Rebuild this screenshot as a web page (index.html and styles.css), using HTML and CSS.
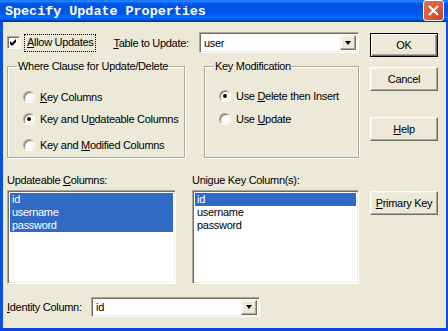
FILE: index.html
```html
<!DOCTYPE html>
<html>

<head>
	<meta charset="UTF-8">
	<title>Specify Update Properties</title>
	<link rel="stylesheet" href="styles.css">
</head>

<body>
	<div class="window">
		<div class="titlebar">
			<span class="title">Specify Update Properties</span>
			<div class="close">
				<svg width="19" height="19" viewBox="0 0 19 19">
					<path d="M5 5 L14 14 M14 5 L5 14" stroke="#fff" stroke-width="2.2" fill="none" />
				</svg>
			</div>
		</div>
		<div class="client">
			<div class="main">
				<div class="top-row">
					<div class="check-wrap">
						<span class="checkbox">
							<svg width="7" height="7" viewBox="0 0 7 7">
								<path d="M0 2 L2 4 L6 0 L6 3 L2 7 L0 5 Z" fill="#000" />
							</svg>
						</span>
						<span class="focus"><u>A</u>llow Updates</span>
					</div>
					<span class="table-label"><u>T</u>able to Update:</span>
					<div class="combo combo-table">
						<span class="combo-text">user</span>
						<span class="drop"><span class="arrow"></span></span>
					</div>
				</div>

				<div class="groups">
					<fieldset class="group group-where">
						<legend>Where Clause for Update/Delete</legend>
						<div class="radio-row r1"><span class="radio"></span><span><u>K</u>ey Columns</span></div>
						<div class="radio-row r2"><span class="radio on"></span><span>Key and U<u>p</u>dateable Columns</span></div>
						<div class="radio-row r3"><span class="radio"></span><span>Key and <u>M</u>odified Columns</span></div>
					</fieldset>
					<fieldset class="group group-key">
						<legend>Key Modification</legend>
						<div class="radio-row k1"><span class="radio on"></span><span>Use <u>D</u>elete then Insert</span></div>
						<div class="radio-row k2"><span class="radio"></span><span>Use <u>U</u>pdate</span></div>
					</fieldset>
				</div>

				<div class="lists">
					<div class="list-col list-left">
						<div class="list-label">Updateable <u>C</u>olumns:</div>
						<div class="listbox">
							<div class="item sel">id</div>
							<div class="item sel">username</div>
							<div class="item sel">password</div>
						</div>
					</div>
					<div class="list-col list-right">
						<div class="list-label">Unigue Key Column(s):</div>
						<div class="listbox">
							<div class="item sel">id</div>
							<div class="item">username</div>
							<div class="item">password</div>
						</div>
					</div>
				</div>

				<div class="identity">
					<span class="identity-label"><u>I</u>dentity Column:</span>
					<div class="combo combo-identity">
						<span class="combo-text">id</span>
						<span class="drop"><span class="arrow"></span></span>
					</div>
				</div>
			</div>

			<div class="buttons">
				<div class="btn default">OK</div>
				<div class="btn cancel">Cancel</div>
				<div class="btn help"><u>H</u>elp</div>
				<div class="btn pk"><u>P</u>rimary Key</div>
			</div>
		</div>
	</div>
</body>

</html>
```

FILE: styles.css
```css
body {
	margin: 0;
	background: #fff;
	font-family: "Liberation Sans", Arial, sans-serif;
	font-size: 11px;
	letter-spacing: -0.3px;
	white-space: nowrap;
	color: #000;
}

.window {
	width: 448px;
	height: 331px;
	display: flex;
	flex-direction: column;
	overflow: hidden;
}

.titlebar {
	height: 22px;
	flex: none;
	display: flex;
	align-items: center;
	justify-content: space-between;
	padding: 0 4px 0 5px;
	background: linear-gradient(to bottom, #0058ee 0%, #3593ff 4%, #288eff 6%, #127dff 8%, #036ffc 10%, #0262ee 14%, #0057e5 20%, #0054e3 24%, #0055eb 56%, #005bf5 66%, #026afe 76%, #0062ef 86%, #0052d6 92%, #0040ab 94%, #003092 100%);
}

.title {
	color: #fff;
	font-family: "Liberation Mono", "DejaVu Sans Mono", monospace;
	font-weight: bold;
	font-size: 13.4px;
	letter-spacing: 0;
	margin-top: 1px;
}

.close {
	width: 19px;
	height: 19px;
	border: 1px solid #fff;
	border-radius: 3px;
	background: radial-gradient(circle at 80% 85%, #cc4626 0%, #e0582f 45%, #e67155 100%);
	display: flex;
	align-items: center;
	justify-content: center;
	margin-top: -1px;
}

.close svg {
	display: block;
}

.client {
	flex: 1;
	display: flex;
	background: #ece9d8;
	border-left: 3px solid #0a50e0;
	border-right: 2px solid #0a50e0;
	border-bottom: 3px solid #0a46d8;
	padding: 10px 0 0 4px;
}

.main {
	width: 352px;
	display: flex;
	flex-direction: column;
}

/* top row */

.top-row {
	height: 21px;
	display: flex;
	align-items: center;
}

.check-wrap {
	display: flex;
	align-items: center;
}

.checkbox {
	width: 13px;
	height: 13px;
	box-sizing: border-box;
	background: #fff;
	border: 1px solid;
	border-color: #aca899 #fff #fff #aca899;
	box-shadow: inset 1px 1px 0 #716f64, inset -1px -1px 0 #f1efe2;
	display: flex;
	align-items: center;
	justify-content: center;
}

.checkbox svg {
	display: block;
}

.focus {
	margin-left: 5px;
	padding: 1px 2px 2px 2px;
	outline: 1px dotted #000;
	line-height: 13px;
}

.table-label {
	margin-left: 18px;
}

.combo {
	background: #fff;
	border: 1px solid;
	border-color: #aca899 #fff #fff #aca899;
	box-shadow: inset 1px 1px 0 #716f64, inset -1px -1px 0 #f1efe2;
	display: flex;
	align-items: center;
	justify-content: space-between;
	padding: 2px;
	box-sizing: border-box;
}

.combo-text {
	padding-left: 2px;
}

.combo-table {
	width: 160px;
	height: 21px;
	margin-left: auto;
	margin-right: 0;
}

.drop {
	width: 16px;
	height: 15px;
	box-sizing: border-box;
	background: #ece9d8;
	border: 1px solid;
	border-color: #f1efe2 #716f64 #716f64 #f1efe2;
	box-shadow: inset -1px -1px 0 #aca899, inset 1px 1px 0 #fff;
	display: flex;
	align-items: center;
	justify-content: center;
}

.arrow {
	width: 0;
	height: 0;
	border-left: 3.5px solid transparent;
	border-right: 3.5px solid transparent;
	border-top: 4px solid #000;
}

/* group boxes */

.groups {
	display: flex;
	gap: 19px;
	margin-top: 7px;
}

.group {
	margin: 0;
	padding: 0 0 0 14px;
	height: 98px;
	box-sizing: border-box;
	border: 1px solid #aca899;
	box-shadow: inset 1px 1px 0 #fff, 1px 1px 0 #fff;
	min-width: 0;
}

.group legend {
	padding: 0 1px;
	margin-left: -5px;
	line-height: 13px;
}

.group-where {
	width: 178px;
}

.group-key {
	width: 155px;
}

.radio-row {
	display: flex;
	align-items: center;
	height: 14px;
}

.radio {
	width: 12px;
	height: 12px;
	box-sizing: border-box;
	border-radius: 50%;
	background: #fff;
	border: 1px solid;
	border-color: #aca899 #fff #fff #aca899;
	box-shadow: inset 1px 1px 0 #716f64, inset -1px -1px 0 #f1efe2;
	margin-right: 5px;
	flex: none;
	display: flex;
	align-items: center;
	justify-content: center;
}

.radio.on::after {
	content: "";
	width: 4px;
	height: 4px;
	border-radius: 50%;
	background: #000;
}

.r1 {
	margin-top: 17px;
}

.r2 {
	margin-top: 8px;
}

.r3 {
	margin-top: 12px;
}

.k1 {
	margin-top: 16px;
}

.k2 {
	margin-top: 9px;
}

.group-where .radio-row {
	margin-left: 1px;
}

/* lists */

.lists {
	display: flex;
	gap: 16px;
	margin-top: 16px;
}

.list-left {
	width: 170px;
}

.list-right {
	width: 168px;
}

.list-label {
	line-height: 13px;
	margin-bottom: 3px;
}

.listbox {
	height: 94px;
	box-sizing: border-box;
	background: #fff;
	border: 1px solid;
	border-color: #aca899 #fff #fff #aca899;
	box-shadow: inset 1px 1px 0 #716f64, inset -1px -1px 0 #f1efe2;
	padding: 2px;
}

.item {
	height: 13px;
	line-height: 13px;
	padding-left: 2px;
}

.item.sel {
	background: #316ac5;
	color: #fff;
}

/* identity */

.identity {
	display: flex;
	align-items: center;
	margin-top: 13px;
}

.combo-identity {
	width: 169px;
	height: 20px;
	margin-left: auto;
	margin-right: 99px;
}

/* buttons */

.buttons {
	margin-left: 11px;
	display: flex;
	flex-direction: column;
	padding-top: 1px;
}

.btn {
	width: 68px;
	height: 24px;
	box-sizing: border-box;
	display: flex;
	align-items: center;
	justify-content: center;
	background: #ece9d8;
	border: 1px solid;
	border-color: #fff #716f64 #716f64 #fff;
	box-shadow: inset -1px -1px 0 #aca899, inset 1px 1px 0 #f1efe2;
}

.btn.default {
	border: 1px solid #000;
	box-shadow: inset 1px 1px 0 #fff, inset -1px -1px 0 #716f64, inset -2px -2px 0 #aca899;
}

.cancel {
	margin-top: 10px;
}

.help {
	margin-top: 26px;
}

.pk {
	margin-top: 50px;
}
```
